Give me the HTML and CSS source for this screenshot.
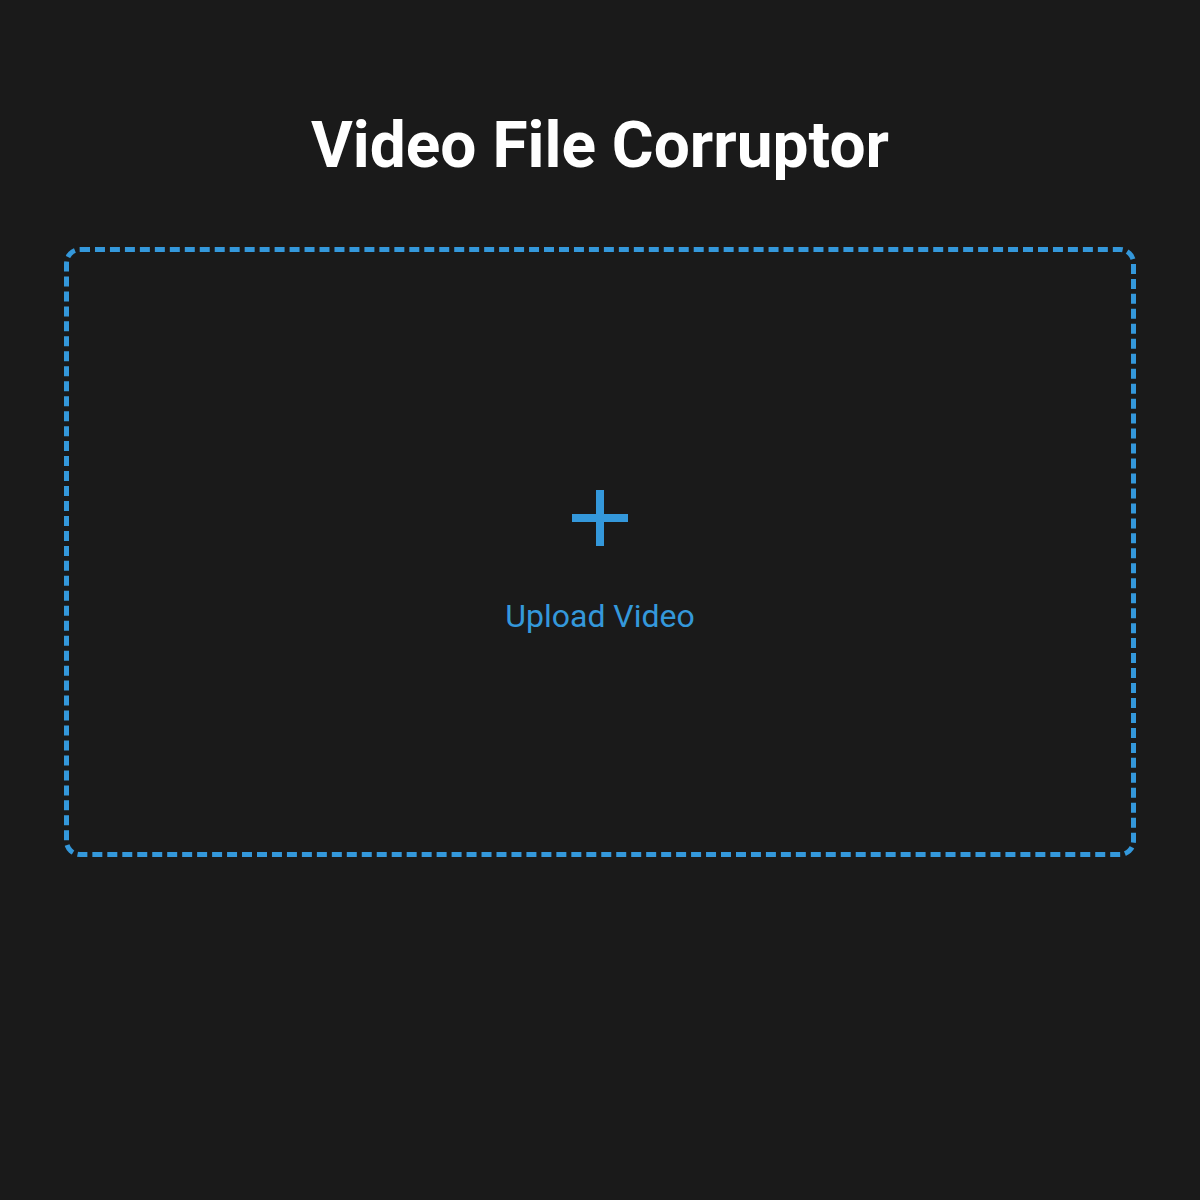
FILE: index.html
```html
<!DOCTYPE html>
<html>
<head>
<meta charset="utf-8">
<link rel="stylesheet" href="styles.css">
</head>
<body>
<main class="app">
  <h1 class="title">Video File Corruptor</h1>
  <label class="dropzone">
    <svg class="plus" width="56" height="56" viewBox="0 0 56 56"><path d="M28 0V56M0 28H56" stroke="#3498db" stroke-width="8" fill="none"/></svg>
    <span class="label">Upload Video</span>
  </label>
</main>
</body>
</html>
```

FILE: styles.css
```css
html, body {
  margin: 0;
  padding: 0;
  background: #1a1a1a;
}
body {
  font-family: Roboto, "Liberation Sans", sans-serif;
  color: #ffffff;
}
.app {
  padding: 108px 64px 0;
  display: flex;
  flex-direction: column;
}
.title {
  margin: 0 0 64px;
  text-align: center;
  font-size: 64px;
  font-weight: 700;
  line-height: 75px;
}
.dropzone {
  box-sizing: border-box;
  height: 610px;
  border: 5px dashed #3498db;
  border-radius: 16px;
  display: flex;
  flex-direction: column;
  align-items: center;
  justify-content: center;
  padding-top: 21px;
}
.plus {
  display: block;
}
.label {
  margin-top: 51px;
  font-size: 32px;
  line-height: 38px;
  color: #3498db;
}
```
